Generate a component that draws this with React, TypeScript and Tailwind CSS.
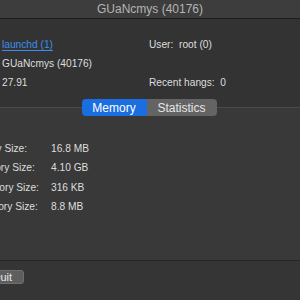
const font = { fontFamily: '"Liberation Sans", Arial, sans-serif' };

function InfoRow({ left, right, link }: { left: string; right?: string; link?: boolean }) {
  return (
    <div className="flex h-[19px] items-center">
      <div className="w-[149px] pl-[2px]">
        {link ? (
          <span className="text-[#3a8ef0] underline underline-offset-2">{left}</span>
        ) : (
          <span>{left}</span>
        )}
      </div>
      <div className="whitespace-pre">{right}</div>
    </div>
  );
}

const memory = [
  ["Real Memory Size:", "16.8 MB"],
  ["Virtual Memory Size:", "4.10 GB"],
  ["Shared Memory Size:", "316 KB"],
  ["Private Memory Size:", "8.8 MB"],
];

export default function App() {
  return (
    <div
      className="flex h-[300px] w-[300px] flex-col overflow-hidden bg-[#333333] text-[10.2px] text-[#dedede]"
      style={font}
    >
      <div className="flex h-[19px] shrink-0 items-center justify-center border-b border-[#1c1c1c] bg-[#3d3d3d] text-[12px] text-[#b4b4b4]">
        GUaNcmys (40176)
      </div>

      <div className="pt-[16px]">
        <InfoRow left="launchd (1)" right="User:  root (0)" link />
        <InfoRow left="GUaNcmys (40176)" />
        <InfoRow left="27.91" right="Recent hangs:  0" />
      </div>

      <div className="mt-[15px] flex h-[154px] shrink-0 flex-col border-y border-t-[#4a4a4a] border-b-[#262626] bg-[#393939]">
        <div className="-mt-[9px] flex justify-center pr-[2px]">
          <div className="flex h-[17px] overflow-hidden rounded-[4px] text-[12px]">
            <div className="flex w-[65px] items-center justify-center bg-[#1b6ee0] text-white">
              Memory
            </div>
            <div className="flex w-[70px] items-center justify-center bg-[#646464] text-[#e6e6e6]">
              Statistics
            </div>
          </div>
        </div>

        <div className="-ml-[59px] mt-[23px]">
          {memory.map(([label, value]) => (
            <div key={label} className="flex h-[19.3px] items-center whitespace-nowrap">
              <div className="w-[110px] shrink-0">{label}</div>
              <div>{value}</div>
            </div>
          ))}
        </div>
      </div>

      <div className="flex flex-1 items-start bg-[#353535] pt-[9px]">
        <div className="-ml-[20px] flex h-[14px] w-[44px] items-center justify-center rounded-[3px] border border-[#6e6e6e] bg-[#5e5e5e] text-[11px] text-[#e8e8e8]">
          Quit
        </div>
      </div>
    </div>
  );
}
